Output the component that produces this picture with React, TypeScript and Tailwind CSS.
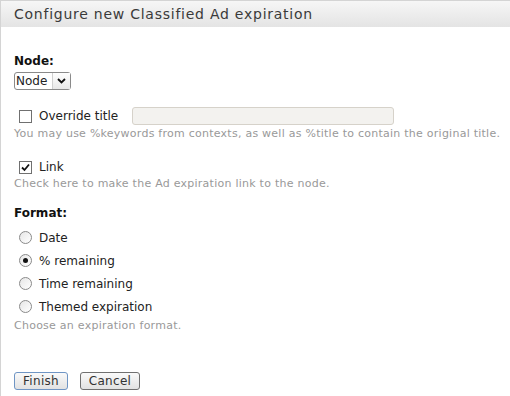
import { useState } from 'react'

const FONT = { fontFamily: '"DejaVu Sans", Verdana, sans-serif' }

function CheckBox({ checked }: { checked: boolean }) {
  return (
    <span className="flex h-[13px] w-[13px] shrink-0 items-center justify-center border border-[#707070] bg-white">
      {checked ? (
        <svg width="9" height="9" viewBox="0 0 9 9">
          <path d="M1 4.5 L3.5 7 L8 1.5" fill="none" stroke="#111" strokeWidth="1.8" />
        </svg>
      ) : null}
    </span>
  )
}

function Radio({ checked }: { checked: boolean }) {
  return (
    <span className="flex h-[13px] w-[13px] shrink-0 items-center justify-center rounded-full border border-[#8a8a8a] bg-gradient-to-br from-[#e6e6e6] to-white">
      {checked ? <span className="h-[5px] w-[5px] rounded-full bg-[#111]" /> : null}
    </span>
  )
}

const formats = ['Date', '% remaining', 'Time remaining', 'Themed expiration']

export default function App() {
  const [format] = useState('% remaining')

  return (
    <div style={FONT} className="min-h-[396px] w-[510px] border-l border-[#d4d4d4] bg-white text-[#222]">
      <div className="flex h-[27px] items-center border-t border-[#d4d4d4] bg-gradient-to-b from-[#f6f6f6] to-[#e4e4e4] px-[13px] text-[14px] tracking-[0.75px] text-[#3a3a3a]">
        Configure new Classified Ad expiration
      </div>

      <div className="pl-[13px]">
        <div className="mt-[26px] text-[12px] font-bold leading-[16px] text-[#111]">Node:</div>
        <div className="mt-[3px] flex h-[18px] w-[57px] items-stretch rounded-[3px] border border-[#8a8a8a] bg-white text-[12px]">
          <span className="flex flex-1 items-center pl-[1px] leading-none">Node</span>
          <span className="flex w-[18px] items-center justify-center border-l border-[#d0d0d0] bg-gradient-to-b from-white to-[#e8e8e8]">
            <svg width="9" height="6" viewBox="0 0 9 6">
              <path d="M1 1 L4.5 4.5 L8 1" fill="none" stroke="#111" strokeWidth="1.8" />
            </svg>
          </span>
        </div>

        <div className="mt-[17px] flex h-[18px] items-center">
          <span className="ml-[5px]"><CheckBox checked={false} /></span>
          <span className="ml-[7px] text-[12px]">Override title</span>
          <span className="ml-[14px] h-[18px] w-[262px] rounded-[3px] border border-[#d6d2ca] bg-[#f3f2ef]" />
        </div>
        <div className="mt-[2px] text-[11px] leading-[14px] tracking-[0.25px] text-[#999]">
          You may use %keywords from contexts, as well as %title to contain the original title.
        </div>

        <div className="mt-[18px] flex h-[16px] items-center">
          <span className="ml-[5px]"><CheckBox checked /></span>
          <span className="ml-[7px] text-[12px]">Link</span>
        </div>
        <div className="mt-[2px] text-[11px] leading-[14px] tracking-[0.25px] text-[#999]">
          Check here to make the Ad expiration link to the node.
        </div>

        <div className="mt-[14px] text-[12px] font-bold leading-[16px] text-[#111]">Format:</div>
        <div className="mt-[5px]">
          {formats.map((item) => (
            <div key={item} className="flex h-[23px] items-center">
              <span className="ml-[5px]"><Radio checked={item === format} /></span>
              <span className="ml-[7px] text-[12px]">{item}</span>
            </div>
          ))}
        </div>
        <div className="mt-[1px] text-[11px] leading-[14px] tracking-[0.25px] text-[#999]">Choose an expiration format.</div>

        <div className="mt-[39px] flex gap-[12px]">
          <button type="button" className="h-[18px] w-[54px] rounded-[3px] border border-[#6f95c4] bg-gradient-to-b from-[#fafafa] to-[#e2e2e2] text-[12px] leading-none tracking-[0.3px] text-[#333]">
            Finish
          </button>
          <button type="button" className="h-[18px] w-[60px] rounded-[3px] border border-[#707070] bg-gradient-to-b from-[#fafafa] to-[#e2e2e2] text-[12px] leading-none tracking-[0.3px] text-[#333]">
            Cancel
          </button>
        </div>
      </div>
    </div>
  )
}
